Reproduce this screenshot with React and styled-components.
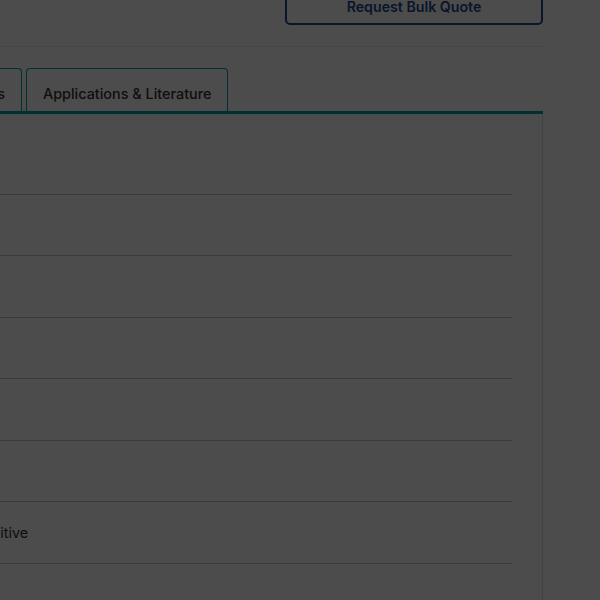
import React from 'react'
import styled, { createGlobalStyle } from 'styled-components'

const GlobalStyle = createGlobalStyle`
  html, body {
    margin: 0;
    padding: 0;
    background: #ffffff;
    overflow: hidden;
  }
  body {
    font-family: Inter, "Noto Sans", "Liberation Sans", sans-serif;
    color: #3a3a3a;
  }
`

const specs = [
  { label: 'CAS Number', value: '7732-18-5' },
  { label: 'Molecular Weight', value: '18.02 g/mol' },
  { label: 'Purity', value: '≥ 99.5%' },
  { label: 'Form', value: 'Liquid' },
  { label: 'Storage Temperature', value: '2–8 °C' },
  { label: 'Shelf Life', value: '24 months' },
  { label: 'Handling', value: 'Moisture Sensitive' },
  { label: 'Grade', value: 'Reagent' },
]

const App = () => {
  return (
    <>
      <GlobalStyle />
      <Main>
        <Header>
          <QuoteButton>Request Bulk Quote</QuoteButton>
        </Header>
        <TabBar>
          <Tab>Specifications</Tab>
          <Tab>Applications &amp; Literature</Tab>
        </TabBar>
        <Panel>
          <PanelInner>
            {specs.map((s) => (
              <SpecRow key={s.label}>
                <SpecLabel>{s.label}</SpecLabel>
                <SpecValue>{s.value}</SpecValue>
              </SpecRow>
            ))}
          </PanelInner>
        </Panel>
      </Main>
      <Backdrop />
    </>
  )
}

const Main = styled.div`
  width: 843px;
  margin-left: -300px;
  margin-top: -20px;
`

const Header = styled.div`
  display: flex;
  justify-content: flex-end;
  padding-bottom: 21px;
  border-bottom: 1px solid #ececec;
`

const QuoteButton = styled.button`
  width: 258px;
  height: 45px;
  background: #ffffff;
  border: 2px solid #23478f;
  border-radius: 5px;
  color: #23478f;
  font-family: Inter, "Noto Sans", sans-serif;
  font-size: 14.2px;
  font-weight: 600;
  line-height: 22px;
  display: flex;
  align-items: flex-start;
  justify-content: center;
  padding: 14px 0 0;
`

const TabBar = styled.div`
  display: flex;
  gap: 4px;
  margin-top: 21px;
  padding-left: 190px;
  border-bottom: 3px solid #00a0a6;
`

const Tab = styled.div`
  height: 43px;
  padding: 6px 16px 0 16px;
  display: flex;
  align-items: center;
  box-sizing: border-box;
  border: 1px solid #00a0a6;
  border-bottom: none;
  border-radius: 4px 4px 0 0;
  font-size: 14.4px;
  font-weight: 500;
  color: #333333;
`

const Panel = styled.div`
  border-right: 1px solid #dcdcdc;
  padding-right: 3px;
  height: 520px;
`

const PanelInner = styled.div`
  border-right: 1px solid #f4f4f4;
  padding: 19px 26px 0 0;
  height: 100%;
  box-sizing: border-box;
`

const SpecRow = styled.div`
  display: grid;
  grid-template-columns: 180px 1fr;
  align-items: center;
  height: 60.5px;
  border-bottom: 1px solid #c4c4c4;
  font-size: 14.4px;
`

const SpecLabel = styled.div`
  font-weight: 600;
  color: #333333;
`

const SpecValue = styled.div`
  color: #333333;
  padding-left: 23px;
`

const Backdrop = styled.div`
  position: fixed;
  inset: 0;
  background: rgba(0, 0, 0, 0.7);
`

export default App
